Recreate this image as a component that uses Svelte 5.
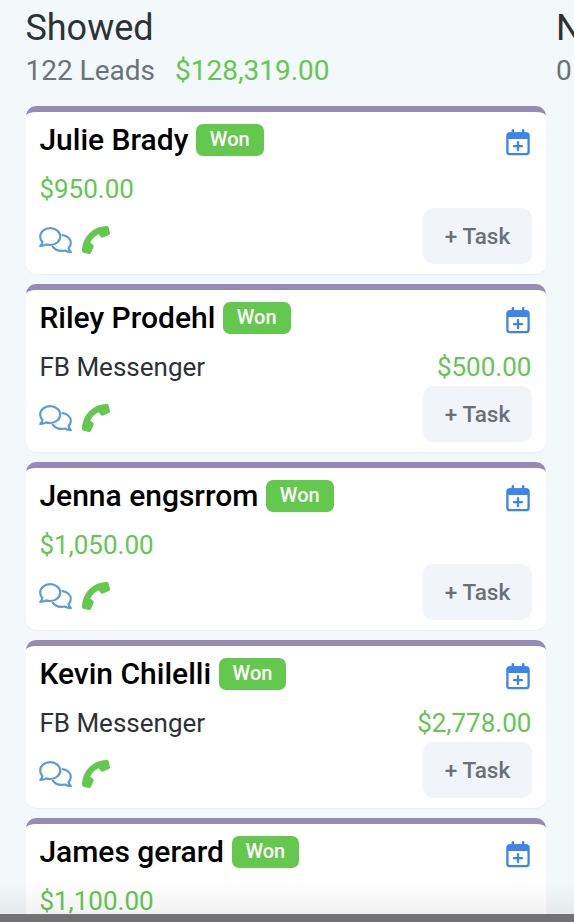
<script>
	const columns = [
		{
			title: "Showed",
			count: "122 Leads",
			total: "$128,319.00",
			leads: [
				{ name: "Julie Brady", source: "", amount: "$950.00" },
				{ name: "Riley Prodehl", source: "FB Messenger", amount: "$500.00" },
				{ name: "Jenna engsrrom", source: "", amount: "$1,050.00" },
				{ name: "Kevin Chilelli", source: "FB Messenger", amount: "$2,778.00" },
				{ name: "James gerard", source: "", amount: "$1,100.00" },
			],
		},
		{ title: "No Show", count: "0 Leads", total: "", leads: [] },
	];
</script>

<div class="board">
	{#each columns as column}
		<section class="column">
			<header>
				<h2>{column.title}</h2>
				<div class="summary">
					<span>{column.count}</span>
					{#if column.total}<span class="money">{column.total}</span>{/if}
				</div>
			</header>
			{#each column.leads as lead}
				<article class="card">
					<div class="top">
						<span class="name">{lead.name}</span>
						<span class="badge">Won</span>
						<svg class="calendar" viewBox="0 0 24 27">
							<path d="M6.8 1.2v4M17.2 1.2v4" stroke-width="2.4" />
							<rect x="1.4" y="4.4" width="21.2" height="20.8" rx="2.4" stroke-width="2.3" />
							<path class="fill" d="M1 10V6.2Q1 3.3 4 3.3h16q3 0 3 2.900V10z" />
							<path d="M12 13.2v8M8 17.2h8" stroke-width="2.3" />
						</svg>
					</div>
					<div class="details">
						{#if lead.source}<span>{lead.source}</span>{/if}
						<span class="money">{lead.amount}</span>
					</div>
					<div class="actions">
						<svg class="comments" viewBox="0 0 33 27">
							<path d="M11.2 1.2C5.5 1.2 1.2 4.9 1.2 9.4c0 2.2.8 4.2 2.2 5.7-.3 1.5-1 2.7-2.1 3.9 2.4 0 4.4-.6 6-1.6 1.2.4 2.5.6 3.9.6 5.5 0 10-3.9 10-8.600s-4.500-8.200-10-8.200z" />
							<path d="M23.6 8.2c4.7.5 8.2 3.7 8.2 7.7 0 2-.8 3.8-2.2 5.2.4 1.5 1.2 2.8 2.2 4-2.4 0-4.4-.6-6-1.6-1.1.3-2.3.4-3.5.4-3.7 0-6.9-1.8-8.500-4.200" />
						</svg>
						<svg class="phone" viewBox="-12 -12 536 536">
							<path transform="rotate(180 256 256)" d="M493.4 24.6l-104-24c-11.3-2.6-22.9 3.3-27.5 13.9l-48 112c-4.2 9.8-1.4 21.3 6.9 28l60.6 49.6c-36 76.7-98.9 140.5-177.2 177.2l-49.6-60.6c-6.8-8.3-18.2-11.1-28-6.9l-112 48C3.9 366.5-2 378.1.6 389.4l24 104C27.1 504.2 36.7 512 48 512c256.1 0 464-207.5 464-464 0-11.2-7.7-20.9-18.6-23.4z" />
						</svg>
						<button>+ Task</button>
					</div>
				</article>
			{/each}
		</section>
	{/each}
	<div class="fade"></div>
</div>

<style>
	:global(body) {
		background: #f3f8fb;
		overflow: hidden;
	}
	.board {
		position: relative;
		display: flex;
		gap: 11px;
		height: 922px;
		padding-left: 26px;
		box-sizing: border-box;
		overflow: hidden;
		background: #f3f8fb;
		font-family: Roboto, sans-serif;
		color: #2d3236;
	}
	.column {
		flex: 0 0 519.5px;
	}
	header {
		height: 106px;
		box-sizing: border-box;
		margin-left: -0.6px;
		padding-top: 6px;
	}
	h2 {
		margin: 0;
		font-size: 36px;
		font-weight: 400;
		line-height: 44px;
	}
	.summary {
		display: flex;
		gap: 20px;
		font-size: 28px;
		line-height: 42px;
		color: #6b7278;
	}
	.money { color: #65c654; }
	.card {
		height: 168px;
		margin-bottom: 10px;
		padding: 12px 13.5px 0 13.4px;
		box-sizing: border-box;
		border-top: 6px solid #968bb5;
		border-radius: 10px;
		background: #fff;
		box-shadow: 0 1px 1px rgba(80, 100, 110, 0.06);
	}
	.top {
		display: flex;
		align-items: center;
		height: 32px;
	}
	.name {
		font-size: 30px;
		font-weight: 500;
		line-height: 32px;
		color: #000;
	}
	.badge {
		height: 32px;
		margin-left: 8px;
		padding: 0 14px 0 13.5px;
		border-radius: 7px;
		background: #64c84f;
		color: #fff;
		font-size: 20px;
		font-weight: 500;
		line-height: 31px;
	}
	.calendar {
		width: 24px;
		height: 27px;
		margin: 5px 2px 0 auto;
		fill: none;
		stroke: #3d85eb;
		stroke-linecap: round;
	}
	.calendar .fill {
		fill: #3d85eb;
		stroke: none;
	}
	.details {
		display: flex;
		justify-content: space-between;
		height: 52px;
		padding-right: 0.6px;
		font-size: 26px;
		line-height: 66px;
	}
	.actions {
		display: flex;
		align-items: center;
		height: 56px;
	}
	.comments {
		width: 33px;
		height: 27px;
		margin-top: 8px;
		fill: none;
		stroke: #5a9ed3;
		stroke-width: 2.2;
		stroke-linecap: round;
		stroke-linejoin: round;
	}
	.phone {
		width: 28px;
		height: 28px;
		margin: 8px 0 0 9.6px;
		fill: #64c84f;
		stroke: #64c84f;
		stroke-width: 24;
		stroke-linejoin: round;
	}
	button {
		width: 109px;
		height: 56px;
		margin-left: auto;
		padding: 0;
		border: 0;
		border-radius: 10px;
		background: #f1f4f9;
		color: #697176;
		font: 500 22.5px Roboto, sans-serif;
	}
	/* scroll shadow above the bottom bar */
	.fade {
		position: absolute;
		left: 0;
		right: 0;
		bottom: 0;
		height: 40px;
		box-sizing: border-box;
		border-bottom: 8px solid #707274;
		background: linear-gradient(rgba(0, 0, 0, 0), rgba(0, 0, 0, 0.055));
	}
</style>
